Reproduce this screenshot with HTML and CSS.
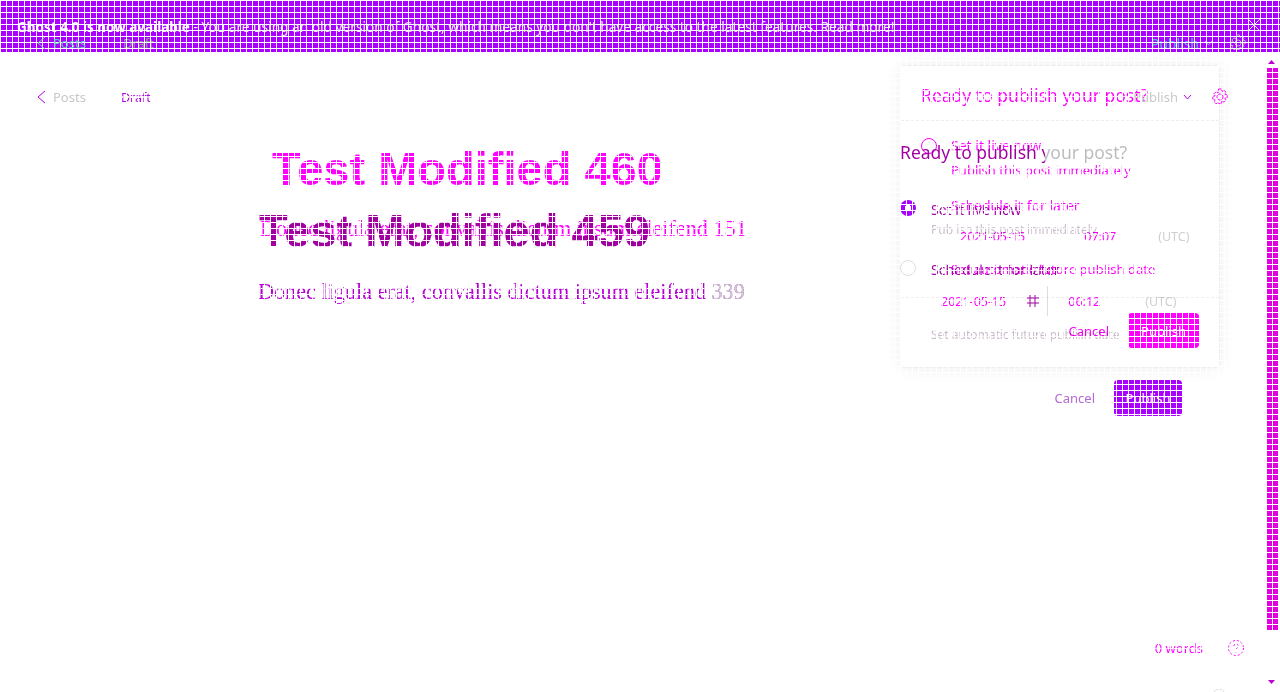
FILE: index.html
```html
<!DOCTYPE html>
<html lang="en">
<head>
    <meta charset="UTF-8">
    <title>Ghost editor visual diff</title>
    <link rel="stylesheet" href="styles.css">
</head>
<body>
    <div class="diff">
        <div class="banner">
            <span class="banner-text"><strong>Ghost 4.0 is now available</strong> - You are using an old version of Ghost, which means you don't have access to the latest features. Read more!</span>
            <svg class="banner-close" width="14" height="14" viewBox="0 0 14 14"><path d="M1 1l12 12M13 1L1 13" /></svg>
        </div>

        <!-- layer without the banner -->
        <section class="layer layer-new">
            <div class="topbar">
                <div class="crumbs">
                    <svg class="back" width="9" height="14" viewBox="0 0 9 14"><path d="M8 1L1 7l7 6" /></svg>
                    <span class="crumb-posts">Posts</span>
                    <span class="crumb-draft">Draft</span>
                </div>
                <div class="actions">
                    <span class="publish-menu">Publish</span>
                    <svg class="chevron" width="9" height="6" viewBox="0 0 9 6"><path d="M1 1l3.500 4L8 1" /></svg>
                    <svg class="gear" width="18" height="18" viewBox="0 0 18 18"><circle cx="9" cy="9" r="3" /><path d="M7.500 1h3l.5 2.400 2-1.200 2 2-1.200 2 2.400.5v3l-2.400.5 1.200 2-2 2-2-1.200-.5 2.400h-3L7 14.600l-2 1.200-2-2 1.200-2L1.800 11.300v-3l2.400-.5-1.200-2 2-2 2 1.200z" /></svg>
                </div>
            </div>
            <div class="editor editor-new">
                <h1 class="title title-new">Test Modified 460</h1>
                <p class="excerpt excerpt-new">Donec ligula erat, convallis dictum ipsum eleifend 151</p>
            </div>

            <div class="card">
                <div class="card-head">Ready to publish your post?</div>
                <div class="option option-first">
                    <span class="radio radio-small"></span>
                    <div>
                        <div class="option-label">Set it live now</div>
                        <div class="option-help">Publish this post immediately</div>
                    </div>
                </div>
                <div class="option option-second">
                    <span class="radio radio-none"></span>
                    <div>
                        <div class="option-label">Schedule it for later</div>
                        <div class="date-row date-row-new">
                            <span class="date">2021-05-15</span>
                            <span class="time">07:07</span>
                            <span class="zone">(UTC)</span>
                        </div>
                        <div class="option-help">Set automatic future publish date</div>
                    </div>
                </div>
                <div class="card-foot">
                    <span class="cancel">Cancel</span>
                    <button class="btn btn-new">Publish</button>
                </div>
            </div>

            <div class="scroll-track"></div>
            <svg class="scroll-arrow arrow-up" width="7" height="4" viewBox="0 0 7 4"><path d="M3.500 0L7 4H0z" /></svg>
            <svg class="scroll-arrow arrow-down" width="7" height="4" viewBox="0 0 7 4"><path d="M0 0h7L3.500 4z" /></svg>
            <div class="word-count">
                <span>0 words</span>
                <svg class="help" width="18" height="18" viewBox="0 0 18 18"><circle cx="9" cy="9" r="7.500" /><path d="M6.800 7a2.200 2.200 0 1 1 3.300 2c-.8.5-1.100 1-1.100 1.800M9 13v.5" /></svg>
            </div>
            <svg class="help-peek" width="12" height="3" viewBox="0 0 12 3"><path d="M1 3a5.500 5.500 0 0 1 10 0" /></svg>
        </section>

        <!-- layer below the banner -->
        <section class="layer layer-old">
            <div class="topbar topbar-old">
                <div class="crumbs">
                    <svg class="back" width="9" height="14" viewBox="0 0 9 14"><path d="M8 1L1 7l7 6" /></svg>
                    <span class="crumb-posts">Posts</span>
                    <span class="crumb-draft">Draft</span>
                </div>
                <div class="actions">
                    <span class="publish-menu">Publish</span>
                    <svg class="chevron" width="9" height="6" viewBox="0 0 9 6"><path d="M1 1l3.500 4L8 1" /></svg>
                    <svg class="gear" width="18" height="18" viewBox="0 0 18 18"><circle cx="9" cy="9" r="3" /><path d="M7.500 1h3l.5 2.400 2-1.200 2 2-1.200 2 2.400.5v3l-2.400.5 1.200 2-2 2-2-1.200-.5 2.400h-3L7 14.600l-2 1.200-2-2 1.200-2L1.800 11.300v-3l2.400-.5-1.200-2 2-2 2 1.200z" /></svg>
                </div>
            </div>
            <div class="editor editor-old">
                <h1 class="title title-old">Test Modified 459</h1>
                <p class="excerpt excerpt-old">Donec ligula erat, convallis dictum ipsum eleifend 339</p>
            </div>

            <div class="panel">
                <div class="panel-head">Ready to publish your post?</div>
                <div class="option panel-first">
                    <span class="radio radio-on"></span>
                    <div>
                        <div class="option-label">Set it live now</div>
                        <div class="option-help">Publish this post immediately</div>
                    </div>
                </div>
                <div class="option panel-second">
                    <span class="radio radio-off"></span>
                    <div>
                        <div class="option-label">Schedule it for later</div>
                        <div class="date-row date-row-old">
                            <span class="date">2021-05-15</span>
                            <svg class="calendar" width="12" height="12" viewBox="0 0 12 12"><path d="M3 0v12M8 0v12M0 3h12M0 8h12" /></svg>
                            <span class="date-sep"></span>
                            <span class="time">06:12</span>
                            <span class="zone">(UTC)</span>
                        </div>
                        <div class="option-help">Set automatic future publish date</div>
                    </div>
                </div>
                <div class="panel-foot">
                    <span class="cancel">Cancel</span>
                    <button class="btn btn-old">Publish</button>
                </div>
            </div>
        </section>
    </div>
</body>
</html>
```

FILE: styles.css
```css
/* General */
:root {
    /* white lines every 6px, pinned to the page with background-attachment: fixed */
    --grid-rows: repeating-linear-gradient(180deg, #fff 0, #fff 1px, transparent 1px, transparent 6px);
    --grid-cols: repeating-linear-gradient(90deg, #fff 0, #fff 1px, transparent 1px, transparent 6px);
}

html, body {
    margin: 0;
    padding: 0;
    background-color: #fff;
}

body {
    font-family: 'Noto Sans', sans-serif;
    overflow: hidden;
}

.banner, .btn, .scroll-track, .title, .card-head,
.option-label, .option-help, .date, .time, .crumb-draft, .excerpt-new, .word-count span {
    background-image: var(--grid-rows), var(--grid-cols);
    background-attachment: fixed;
}

.title, .card-head, .panel-head, .option-label, .option-help,
.date, .time, .crumb-draft, .excerpt-new, .excerpt-old, .word-count span {
    -webkit-background-clip: text;
    background-clip: text;
    color: transparent;
}

.diff {
    position: relative;
    width: 1280px;
    height: 692px;
    overflow: hidden;
}

.layer {
    position: absolute;
    top: 0;
    left: 0;
    width: 1280px;
    height: 692px;
    box-sizing: border-box;
}

.layer-old {
    padding-top: 52px;
}

/* Banner */
.banner {
    height: 52px;
    background-color: #a0f;
    display: flex;
    align-items: center;
    justify-content: space-between;
    padding: 0 19px 0 17px;
    color: #eee;
    font-size: 13.700px;
}

.banner strong {
    font-size: 13.500px;
    font-weight: 700;
    color: #fff;
}

.banner-text {
    margin-top: 1px;
}

.banner-close {
    fill: none;
    stroke: #f2e6ff;
    stroke-width: 1;
    margin-top: -2px;
}

/* Top bar */
.topbar {
    height: 86px;
    padding: 0 33px 0 37px;
    display: flex;
    align-items: center;
    justify-content: space-between;
    font-size: 13px;
    box-sizing: border-box;
}

.crumbs, .actions {
    display: flex;
    align-items: center;
}

.back, .chevron, .gear, .help, .calendar, .help-peek {
    fill: none;
    stroke-width: 1;
}

.crumb-posts {
    margin-left: 7px;
    color: #66c6c6;
}

.crumb-draft {
    margin-left: 37px;
    background-color: #93a59a;
}

.back {
    stroke: #7fc7a8;
}

.publish-menu {
    color: #58bde0;
    font-size: 14px;
}

.chevron {
    stroke: #8fb8cc;
    margin-left: 5px;
}

.gear {
    stroke: #b7b7c8;
    margin-left: 16px;
}

.topbar-old {
    height: 90px;
    padding: 0 51px 0 37px;
}

.topbar-old .back {
    stroke: #b400e6;
}

.topbar-old .crumb-posts {
    color: #c8c8c8;
}

.topbar-old .crumb-draft {
    margin-left: 35px;
    font-size: 12.500px;
    background-color: #b400e6;
}

.topbar-old .publish-menu {
    color: #c9c9c9;
    font-size: 13px;
}

.topbar-old .chevron {
    stroke: #b400e6;
}

.topbar-old .gear {
    margin-left: 19px;
    stroke: #f0f;
    stroke-dasharray: 3 1;
}

/* Editor */
.editor-new {
    margin-top: 54px;
    margin-left: 260px;
}

.editor-old {
    margin-top: 60px;
    margin-left: 258px;
}

.title {
    margin: 0;
    font-family: 'Liberation Sans', sans-serif;
    font-size: 47px;
    line-height: 58px;
    font-weight: 700;
    white-space: nowrap;
}

.title-new {
    margin-left: 12px;
    background-color: #f0f;
}

.title-old {
    margin-left: 1px;
    background-color: #a000a0;
}

.excerpt {
    margin: 0;
    font-family: 'Liberation Serif', serif;
    font-size: 22.200px;
    line-height: 28px;
    white-space: nowrap;
}

.excerpt-new {
    margin-top: 17px;
    background-color: #f0f;
}

/* the last number does not overlap anything, so it stays grey */
.excerpt-old {
    margin-top: 18px;
    background-image:
        linear-gradient(90deg, transparent 712px, #ccc 712px),
        var(--grid-rows),
        var(--grid-cols);
    background-attachment: fixed;
    background-color: #b400d2;
}

/* Popover card */
.card {
    position: absolute;
    left: 900px;
    top: 65px;
    width: 320px;
    height: 303px;
    box-sizing: border-box;
    padding: 0 20px;
    border: 1px solid #eee;
    border-radius: 4px;
    box-shadow: 0 0 18px rgba(0, 0, 0, 0.07);
    background-color: #fff;
}

.card::before {
    content: "";
    position: absolute;
    inset: -30px;
    background-image: var(--grid-rows), var(--grid-cols);
    background-attachment: fixed;
}

.card > * {
    position: relative;
}

.card-head {
    height: 55px;
    margin: 0 -20px;
    padding: 17px 20px 0;
    box-sizing: border-box;
    border-bottom: 1px dashed #eee;
    font-size: 17.500px;
    line-height: 24px;
    background-color: #f0f;
}

.option {
    display: flex;
    gap: 14px;
    font-size: 13px;
}

.option-label {
    font-size: 14px;
    line-height: 20px;
    background-color: #f0f;
}

.option-help {
    line-height: 18px;
    background-color: #f0f;
}

.option-first {
    margin-top: 15px;
}

.option-first .option-label {
    margin-bottom: 5px;
}

.option-second {
    margin-top: 17px;
}

.radio {
    display: block;
    flex: none;
    box-sizing: border-box;
    width: 16px;
    height: 16px;
    border-radius: 50%;
}

.radio-small {
    border: 1px solid #f0f;
    margin-top: 2px;
}

.radio-none {
    visibility: hidden;
}

.radio-on {
    background-image:
        var(--grid-rows),
        var(--grid-cols),
        radial-gradient(circle, #fff 3px, #a0f 3.500px);
    background-attachment: fixed, fixed, scroll;
}

.radio-off {
    border: 1px solid #ddd;
}

.date-row {
    display: flex;
    align-items: center;
    font-size: 12.500px;
}

.date, .time {
    background-color: #f0f;
}

.zone {
    color: #d0d0d0;
}

.date-row-new {
    height: 22px;
    margin: 9px 0 13px 9px;
}

.date-row-new .time {
    margin-left: 59px;
}

.date-row-new .zone {
    margin-left: 42px;
}

.card-foot {
    display: flex;
    align-items: center;
    justify-content: flex-end;
    gap: 19px;
    margin: 19px -20px 0;
    padding: 15px 20px 0;
    border-top: 1px dashed #eee;
    font-size: 13px;
}

.cancel {
    color: #f0f;
}

.btn {
    border: none;
    padding: 0;
    height: 35px;
    border-radius: 4px;
    color: #fff;
    font-family: inherit;
    font-size: 13px;
}

.btn-new {
    width: 71px;
    background-color: #f0f;
}

.btn-old {
    width: 68px;
    height: 36px;
    background-color: #a0f;
}

/* Old publish panel, drawn over the card */
.panel {
    position: absolute;
    left: 900px;
    top: 140px;
    width: 282px;
    mix-blend-mode: multiply;
}

.panel-head {
    font-size: 17.500px;
    line-height: 24px;
    background-image: linear-gradient(90deg, #a000a0 1045px, #bbb 1045px);
    background-attachment: fixed;
}

.panel .option-label {
    background-color: #a000a0;
}

.panel .option-help {
    font-size: 12px;
    line-height: 19px;
    background-color: #c8b8c8;
}

.panel-first {
    margin-top: 36px;
    gap: 15px;
}

.panel-second {
    margin-top: 21px;
    gap: 15px;
}

.date-row-old {
    height: 34px;
    margin: 4px 0 7px 10px;
}

.date-row-old .time {
    margin-left: 20px;
}

.date-row-old .zone {
    margin-left: 45px;
}

.calendar {
    stroke: #a000a0;
    margin-left: 21px;
}

.date-sep {
    width: 1px;
    height: 30px;
    margin-left: 8px;
    background-color: #ddd;
}

.panel-foot {
    display: flex;
    align-items: center;
    justify-content: flex-end;
    gap: 19px;
    margin-top: 36px;
    font-size: 13px;
}

.panel-foot .cancel {
    color: #b46ad2;
}

/* Scrollbar and word count */
.scroll-track {
    position: absolute;
    left: 1266px;
    top: 68px;
    width: 13px;
    height: 562px;
    background-color: #e000e0;
}

.scroll-arrow {
    position: absolute;
    left: 1268px;
    fill: #c000d0;
}

.arrow-up {
    top: 60px;
}

.arrow-down {
    top: 680px;
}

.word-count {
    position: absolute;
    right: 35px;
    top: 639px;
    display: flex;
    align-items: center;
    gap: 24px;
    font-size: 13px;
}

.word-count span {
    background-color: #f0f;
}

.help {
    stroke: #f0f;
    stroke-dasharray: 2 2;
}

.help-peek {
    position: absolute;
    left: 1213px;
    top: 689px;
    stroke: #ddd;
}
```
